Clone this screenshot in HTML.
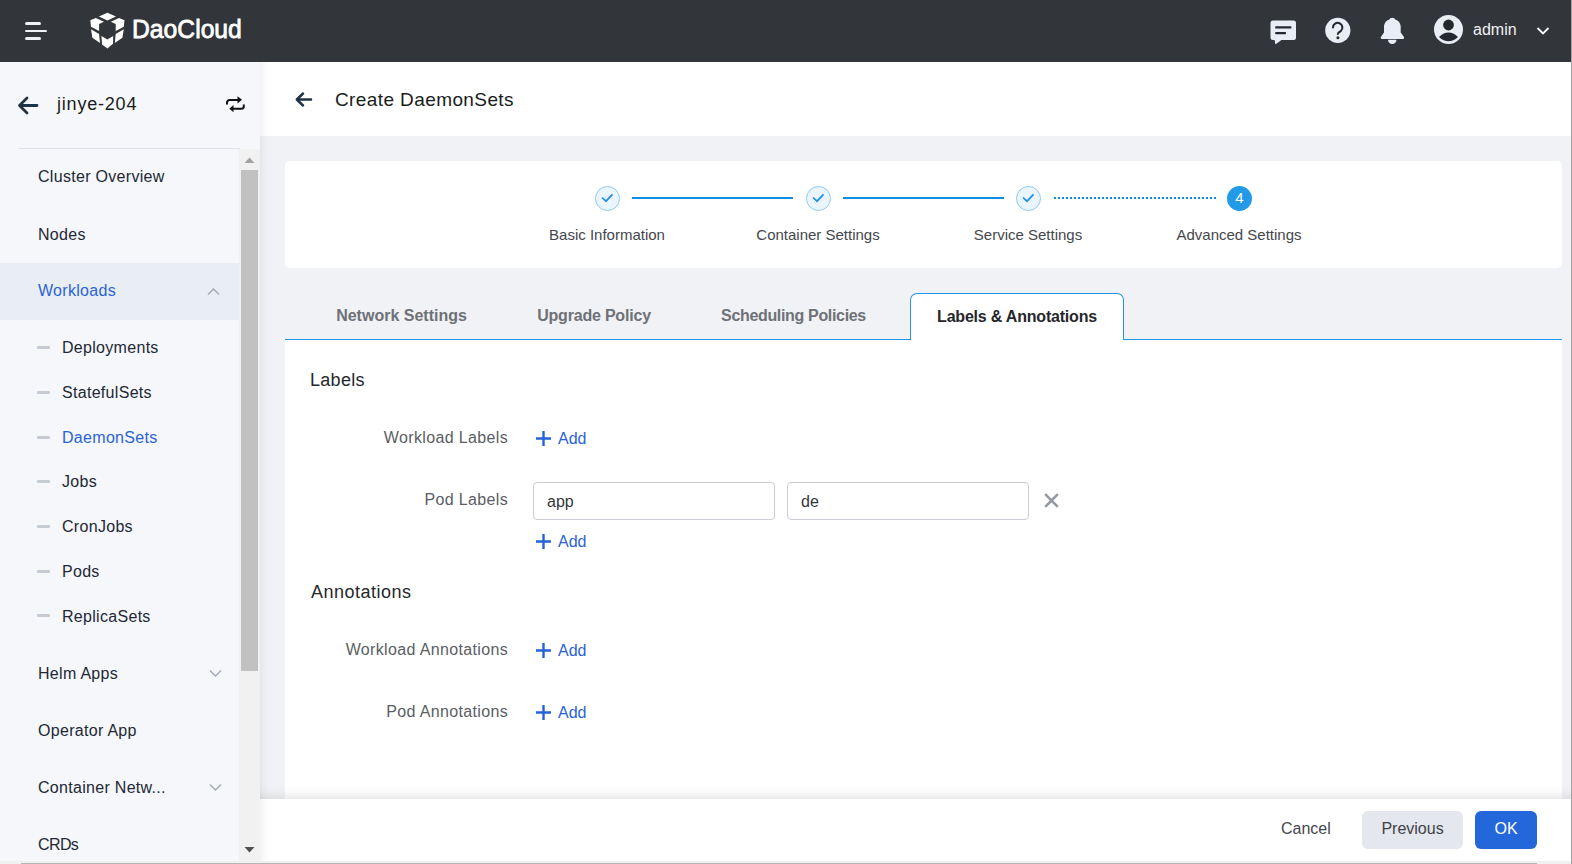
<!DOCTYPE html>
<html><head><meta charset="utf-8">
<style>
*{box-sizing:border-box;margin:0;padding:0}
html,body{width:1572px;height:864px;overflow:hidden;background:#f1f2f5;font-family:"Liberation Sans",sans-serif;color:#25272b}
.a{position:absolute}
.t{position:absolute;white-space:nowrap;line-height:1}
#hdr{left:0;top:0;width:1571px;height:62px;background:#323539}
#rline{left:1571px;top:0;width:1px;height:864px;background:#a3a3a3}
#side{left:0;top:62px;width:260px;height:802px;background:#f5f7fb}
#sideshadow{left:260px;top:62px;width:10px;height:799px;background:linear-gradient(90deg,rgba(0,0,0,.05),rgba(0,0,0,.015) 50%,rgba(0,0,0,0))}
#mainhdr{left:260px;top:62px;width:1311px;height:74px;background:#fff}
#card{left:285px;top:161px;width:1277px;height:107px;background:#fff;border-radius:5px}
#panel{left:285px;top:339px;width:1277px;height:470px;background:#fff}
#tabline{left:285px;top:339px;width:1277px;height:1px;background:#2196e8}
#footer{left:260px;top:799px;width:1311px;height:62px;background:#fff}
#fshadow{left:260px;top:785px;width:1311px;height:14px;background:linear-gradient(180deg,rgba(0,0,0,0),rgba(0,0,0,.02) 50%,rgba(0,0,0,.075))}
#hscroll{left:0;top:861px;width:1571px;height:3px;background:#f0f0f0}
#hthumb{left:21px;top:863px;width:1516px;height:1px;background:#b4b4b4}
.si{font-size:16px;color:#222834;letter-spacing:0.3px}
.sub{font-size:16px;color:#222834;letter-spacing:0.3px}
.dash{position:absolute;left:37px;width:13px;height:3px;background:#c6cbd4;border-radius:1px}
.lbl{font-size:16px;color:#5b5e64;letter-spacing:0.35px}
.add{font-size:16px;color:#2a62d6}
.stepl{font-size:15px;color:#45474c}
.tab{font-size:16px;font-weight:700;color:#6e7177}
</style></head><body>
<div id="hdr" class="a"></div>
<div id="rline" class="a"></div>
<!-- hamburger -->
<div class="a" style="left:25px;top:22px;width:16px;height:3px;background:#eef1f6;border-radius:2px"></div>
<div class="a" style="left:25px;top:30px;width:22px;height:2px;background:#eef1f6;border-radius:1px"></div>
<div class="a" style="left:25px;top:37px;width:16px;height:3px;background:#eef1f6;border-radius:2px"></div>
<!-- logo -->
<svg class="a" style="left:88px;top:10px" width="40" height="40" viewBox="0 0 40 40">
 <path d="M10.9 6.5 L19.4 2.8 L28 6.5 L19.4 10.4 Z" fill="#fff"/>
 <path d="M2.3 10.3 L7.8 7.9 L16 11.7 L11.1 14.1 L11.1 21 L3 16.8 Z" fill="#fff"/>
 <path d="M36.5 10.3 L31 7.9 L22.8 11.7 L27.7 14.1 L27.7 21 L35.8 16.8 Z" fill="#fff"/>
 <path d="M3 19.2 L11.1 24 L12 32.9 L4.4 27.8 Z" fill="#fff"/>
 <path d="M35.8 19.2 L27.7 24 L26.8 32.9 L34.4 27.8 Z" fill="#fff"/>
 <path d="M13.4 25.9 L19.4 29.6 L25.2 25.9 L25 33.8 L19.4 38.4 L14.1 34.5 Z" fill="#fff"/>
</svg>
<div class="t" style="left:132px;top:16px;font-size:26px;font-weight:400;color:#fff;-webkit-text-stroke:0.8px #fff;transform-origin:0 0;transform:scaleX(0.95);letter-spacing:0px">DaoCloud</div>

<!-- header right icons -->
<svg class="a" style="left:1270px;top:20px" width="27" height="25" viewBox="0 0 27 25">
 <path d="M3 0.5 H23.5 A2.5 2.5 0 0 1 26 3 V17.5 A2.5 2.5 0 0 1 23.5 20 H11.5 L6 24 Q5.3 24.3 5.2 23.5 L4.6 20 H3 A2.5 2.5 0 0 1 0.5 17.5 V3 A2.5 2.5 0 0 1 3 0.5 Z" fill="#e9edf5"/>
 <rect x="5.2" y="6.3" width="16.2" height="2.3" rx="0.6" fill="#25282d"/>
 <rect x="5.2" y="11.9" width="10.8" height="2.3" rx="0.6" fill="#25282d"/>
</svg>
<svg class="a" style="left:1325px;top:17px" width="26" height="27" viewBox="0 0 26 27">
 <circle cx="12.8" cy="13.4" r="12.6" fill="#e9edf5"/>
 <path d="M8 10.6 A4.7 4.7 0 1 1 15.9 14 Q12.8 15.6 12.8 17" stroke="#25282d" stroke-width="2" fill="none" stroke-linecap="round"/>
 <circle cx="12.9" cy="20.8" r="1.5" fill="#25282d"/>
</svg>
<svg class="a" style="left:1380px;top:17px" width="25" height="28" viewBox="0 0 25 28">
 <path d="M12.3 0.8 C14 0.8 15 1.8 15.2 2.6 C18.5 3.6 20.7 6.5 20.7 10 V15.5 L23.6 19.5 C24.5 20.5 24.2 21.9 23 21.9 H1.8 C0.6 21.9 0.3 20.5 1.2 19.5 L4 15.5 V10 C4 6.5 6.2 3.6 9.4 2.6 C9.6 1.8 10.6 0.8 12.3 0.8 Z" fill="#e9edf5"/>
 <path d="M8 22.8 H16.5 A4.25 4.3 0 0 1 8 22.8 Z" fill="#e9edf5"/>
</svg>
<svg class="a" style="left:1434px;top:15px" width="30" height="30" viewBox="0 0 30 30">
 <circle cx="14.5" cy="14.6" r="14.5" fill="#e9edf5"/>
 <circle cx="14.5" cy="10" r="5.4" fill="#25282d"/>
 <path d="M5 22 Q14.5 13.2 24 22 Q14.5 30.6 5 22 Z" fill="#25282d"/>
</svg>
<div class="t" style="left:1473px;top:22px;font-size:16px;color:#f0f2f6">admin</div>
<svg class="a" style="left:1536px;top:25.5px" width="14" height="10" viewBox="0 0 14 10">
 <path d="M1.5 2 L7 7.5 L12.5 2" stroke="#fff" stroke-width="1.8" fill="none"/>
</svg>

<!-- sidebar -->
<div id="side" class="a"></div>
<svg class="a" style="left:17px;top:96px" width="22" height="19" viewBox="0 0 22 19">
 <path d="M20 9.5 H3 M10 2 L2.5 9.5 L10 17" stroke="#1f3347" stroke-width="2.8" fill="none" stroke-linecap="round" stroke-linejoin="round"/>
</svg>
<div class="t" style="left:57px;top:95px;font-size:18px;color:#1a1c20;letter-spacing:0.8px">jinye-204</div>
<svg class="a" style="left:225px;top:95px" width="21" height="19" viewBox="0 0 21 19">
 <path d="M2 9.5 V7.5 A2.5 2.5 0 0 1 4.5 5 H13" stroke="#111" stroke-width="2" fill="none"/>
 <path d="M12.5 1.2 L17 4.8 L12.5 8.4 Z" fill="#111"/>
 <path d="M18.8 9.5 V11.3 A2.5 2.5 0 0 1 16.3 13.8 H8" stroke="#111" stroke-width="2" fill="none"/>
 <path d="M8.5 10 L4.3 13.8 L8.5 17.2 Z" fill="#111"/>
</svg>
<div class="a" style="left:19px;top:148px;width:221px;height:1px;background:#dfe3ea"></div>

<div class="t si" style="left:38px;top:169px">Cluster Overview</div>
<div class="t si" style="left:38px;top:227px">Nodes</div>
<div class="a" style="left:0;top:263px;width:239px;height:57px;background:#e9edf4"></div>
<div class="t si" style="left:38px;top:283px;color:#2a64d4">Workloads</div>
<svg class="a" style="left:207px;top:287px" width="13" height="9" viewBox="0 0 13 9">
 <path d="M1 7.5 L6.5 2 L12 7.5" stroke="#a4abb8" stroke-width="1.5" fill="none"/>
</svg>

<div class="dash" style="top:346px"></div><div class="t sub" style="left:62px;top:340px">Deployments</div>
<div class="dash" style="top:391px"></div><div class="t sub" style="left:62px;top:385px">StatefulSets</div>
<div class="dash" style="top:436px"></div><div class="t sub" style="left:62px;top:430px;color:#2a64d4">DaemonSets</div>
<div class="dash" style="top:480px"></div><div class="t sub" style="left:62px;top:474px">Jobs</div>
<div class="dash" style="top:525px"></div><div class="t sub" style="left:62px;top:519px">CronJobs</div>
<div class="dash" style="top:570px"></div><div class="t sub" style="left:62px;top:564px">Pods</div>
<div class="dash" style="top:614px"></div><div class="t sub" style="left:62px;top:609px">ReplicaSets</div>

<div class="t si" style="left:38px;top:666px">Helm Apps</div>
<svg class="a" style="left:209px;top:669px" width="13" height="9" viewBox="0 0 13 9">
 <path d="M1 1.5 L6.5 7 L12 1.5" stroke="#a4abb8" stroke-width="1.5" fill="none"/>
</svg>
<div class="t si" style="left:38px;top:723px">Operator App</div>
<div class="t si" style="left:38px;top:780px">Container Netw...</div>
<svg class="a" style="left:209px;top:783px" width="13" height="9" viewBox="0 0 13 9">
 <path d="M1 1.5 L6.5 7 L12 1.5" stroke="#a4abb8" stroke-width="1.5" fill="none"/>
</svg>
<div class="t si" style="left:38px;top:837px;letter-spacing:-0.6px">CRDs</div>

<!-- sidebar scrollbar -->
<div class="a" style="left:239px;top:149px;width:21px;height:712px;background:#f1f1f1"></div>
<div class="a" style="left:241px;top:170px;width:17px;height:501px;background:#c1c1c1"></div>
<svg class="a" style="left:244px;top:157px" width="11" height="7" viewBox="0 0 11 7"><path d="M0.5 6 L5.5 0.5 L10.5 6 Z" fill="#a3a3a3"/></svg>
<svg class="a" style="left:244px;top:846px" width="11" height="7" viewBox="0 0 11 7"><path d="M0.5 1 L5.5 6.5 L10.5 1 Z" fill="#505050"/></svg>


<!-- main header -->
<div id="mainhdr" class="a"></div>
<svg class="a" style="left:294px;top:91px" width="19" height="17" viewBox="0 0 19 17">
 <path d="M17 8.5 H3.5 M9 2.5 L2.8 8.5 L9 14.5" stroke="#1f3347" stroke-width="2.5" fill="none" stroke-linecap="round" stroke-linejoin="round"/>
</svg>
<div class="t" style="left:335px;top:90px;font-size:19px;color:#1a1c20;letter-spacing:0.4px">Create DaemonSets</div>

<!-- stepper card -->
<div id="card" class="a"></div>
<div class="a" style="left:632px;top:197px;width:161px;height:2px;background:#108ce6"></div>
<div class="a" style="left:843px;top:197px;width:161px;height:2px;background:#108ce6"></div>
<div class="a" style="left:1054px;top:197px;width:162px;height:2px;background:repeating-linear-gradient(90deg,#108ce6 0 2px,transparent 2px 4px)"></div>

<svg class="a" style="left:595px;top:186px" width="25" height="25" viewBox="0 0 25 25">
 <circle cx="12.5" cy="12.5" r="12" fill="#ebf5fd" stroke="#8ecaf3" stroke-width="1"/>
 <path d="M7 11.5 L11 15.2 L17.5 8.3" stroke="#1e90e6" stroke-width="1.7" fill="none"/>
</svg>
<svg class="a" style="left:806px;top:186px" width="25" height="25" viewBox="0 0 25 25">
 <circle cx="12.5" cy="12.5" r="12" fill="#ebf5fd" stroke="#8ecaf3" stroke-width="1"/>
 <path d="M7 11.5 L11 15.2 L17.5 8.3" stroke="#1e90e6" stroke-width="1.7" fill="none"/>
</svg>
<svg class="a" style="left:1016px;top:186px" width="25" height="25" viewBox="0 0 25 25">
 <circle cx="12.5" cy="12.5" r="12" fill="#ebf5fd" stroke="#8ecaf3" stroke-width="1"/>
 <path d="M7 11.5 L11 15.2 L17.5 8.3" stroke="#1e90e6" stroke-width="1.7" fill="none"/>
</svg>
<div class="a" style="left:1227px;top:186px;width:25px;height:25px;border-radius:50%;background:#229ae8"></div>
<div class="t" style="left:1227px;top:190px;width:25px;text-align:center;font-size:15px;color:#fff">4</div>

<div class="t stepl" style="left:507px;top:227px;width:200px;text-align:center">Basic Information</div>
<div class="t stepl" style="left:718px;top:227px;width:200px;text-align:center">Container Settings</div>
<div class="t stepl" style="left:928px;top:227px;width:200px;text-align:center">Service Settings</div>
<div class="t stepl" style="left:1139px;top:227px;width:200px;text-align:center">Advanced Settings</div>

<!-- tabs -->
<div id="panel" class="a"></div>
<div id="tabline" class="a"></div>
<div class="a" style="left:910px;top:293px;width:214px;height:47px;background:#fff;border:1px solid #2196e8;border-bottom:none;border-radius:7px 7px 0 0"></div>
<div class="t tab" style="left:310px;top:308px;width:183px;text-align:center">Network Settings</div>
<div class="t tab" style="left:511px;top:308px;width:166px;text-align:center;letter-spacing:-0.2px">Upgrade Policy</div>
<div class="t tab" style="left:695px;top:308px;width:197px;text-align:center;letter-spacing:-0.33px">Scheduling Policies</div>
<div class="t tab" style="left:910px;top:309px;width:214px;text-align:center;color:#25272b;letter-spacing:-0.2px">Labels &amp; Annotations</div>

<!-- form -->
<div class="t" style="left:310px;top:371px;font-size:18px;color:#25272b;letter-spacing:0.3px">Labels</div>
<div class="t lbl" style="left:300px;top:430px;width:208px;text-align:right">Workload Labels</div>
<svg class="a plus" style="left:535px;top:430px" width="17" height="17" viewBox="0 0 17 17"><path d="M8.5 1 V16 M1 8.5 H16" stroke="#2563d8" stroke-width="2.4"/></svg>
<div class="t add" style="left:558px;top:431px">Add</div>

<div class="t lbl" style="left:300px;top:492px;width:208px;text-align:right">Pod Labels</div>
<div class="a" style="left:533px;top:482px;width:242px;height:38px;border:1px solid #c9cdd6;border-radius:4px;background:#fff"></div>
<div class="t" style="left:547px;top:493.5px;font-size:16px;color:#34373c">app</div>
<div class="a" style="left:787px;top:482px;width:242px;height:38px;border:1px solid #c9cdd6;border-radius:4px;background:#fff"></div>
<div class="t" style="left:801px;top:493.5px;font-size:16px;color:#34373c">de</div>
<svg class="a" style="left:1044px;top:493px" width="15" height="15" viewBox="0 0 15 15"><path d="M1.2 1.2 L13.8 13.8 M13.8 1.2 L1.2 13.8" stroke="#9299a6" stroke-width="2.6"/></svg>
<svg class="a" style="left:535px;top:533px" width="17" height="17" viewBox="0 0 17 17"><path d="M8.5 1 V16 M1 8.5 H16" stroke="#2563d8" stroke-width="2.4"/></svg>
<div class="t add" style="left:558px;top:534px">Add</div>

<div class="t" style="left:311px;top:583px;font-size:18px;color:#25272b;letter-spacing:0.5px">Annotations</div>
<div class="t lbl" style="left:300px;top:642px;width:208px;text-align:right">Workload Annotations</div>
<svg class="a" style="left:535px;top:642px" width="17" height="17" viewBox="0 0 17 17"><path d="M8.5 1 V16 M1 8.5 H16" stroke="#2563d8" stroke-width="2.4"/></svg>
<div class="t add" style="left:558px;top:643px">Add</div>
<div class="t lbl" style="left:300px;top:704px;width:208px;text-align:right">Pod Annotations</div>
<svg class="a" style="left:535px;top:704px" width="17" height="17" viewBox="0 0 17 17"><path d="M8.5 1 V16 M1 8.5 H16" stroke="#2563d8" stroke-width="2.4"/></svg>
<div class="t add" style="left:558px;top:705px">Add</div>

<!-- footer -->
<div id="fshadow" class="a"></div>
<div id="footer" class="a"></div>
<div class="t" style="left:1281px;top:821px;font-size:16px;color:#45474c">Cancel</div>
<div class="a" style="left:1362px;top:811px;width:101px;height:38px;background:#e4e7ee;border-radius:6px"></div>
<div class="t" style="left:1362px;top:821px;width:101px;text-align:center;font-size:16px;color:#3f4146">Previous</div>
<div class="a" style="left:1475px;top:811px;width:62px;height:38px;background:#2467db;border-radius:6px"></div>
<div class="t" style="left:1475px;top:821px;width:62px;text-align:center;font-size:16px;color:#fff">OK</div>

<div id="sideshadow" class="a"></div>
<div id="hscroll" class="a"></div>
<div id="hthumb" class="a"></div>
</body></html>
